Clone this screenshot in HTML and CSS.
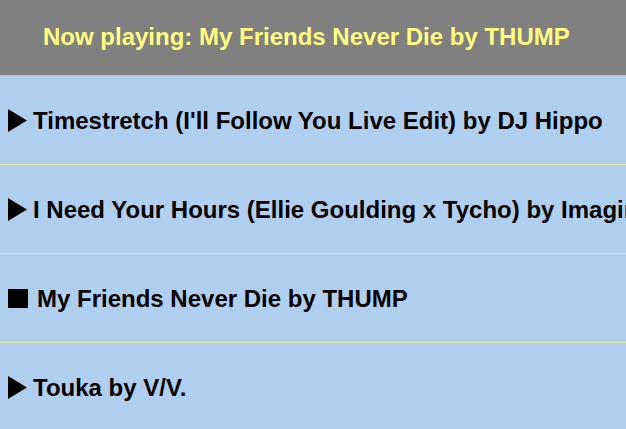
FILE: index.html
```html
<!DOCTYPE html>
<html>
<head>
<meta charset="utf-8">
<link rel="stylesheet" href="styles.css">
</head>
<body>
<header class="now">Now playing: My Friends Never Die by THUMP</header>
<ul class="list">
  <li class="item"><span class="icon play"></span>Timestretch (I'll Follow You Live Edit) by DJ Hippo</li>
  <li class="item"><span class="icon play"></span>I Need Your Hours (Ellie Goulding x Tycho) by Imagine Dragons</li>
  <li class="item"><span class="icon stop"></span>My Friends Never Die by THUMP</li>
  <li class="item"><span class="icon play"></span>Touka by V/V.</li>
</ul>
</body>
</html>
```
FILE: styles.css
```css
html, body {
  margin: 0;
  padding: 0;
  background: #b0cfef;
  overflow: hidden;
}
body {
  font-family: "Liberation Sans", Arial, sans-serif;
  font-weight: bold;
}
.now {
  background: #808080;
  color: #ffff80;
  height: 76px;
  box-sizing: border-box;
  border-bottom: 1px solid #a8c0d8;
  padding-left: 43px;
  padding-bottom: 2px;
  display: flex;
  align-items: center;
  font-size: 24px;
  white-space: nowrap;
}
.list {
  list-style: none;
  margin: 0;
  padding: 0;
}
.item {
  height: 89px;
  box-sizing: border-box;
  border-bottom: 1px solid #d8eaa0;
  display: flex;
  align-items: center;
  padding-left: 8px;
  padding-top: 1px;
  font-size: 24px;
  color: #000;
  white-space: nowrap;
}
.icon {
  flex: none;
  background: #000;
}
.play {
  width: 19px;
  height: 23px;
  margin-right: 6px;
  clip-path: polygon(0 0, 100% 50%, 0 100%);
}
.stop {
  width: 20px;
  height: 19px;
  margin-right: 9px;
}
```
